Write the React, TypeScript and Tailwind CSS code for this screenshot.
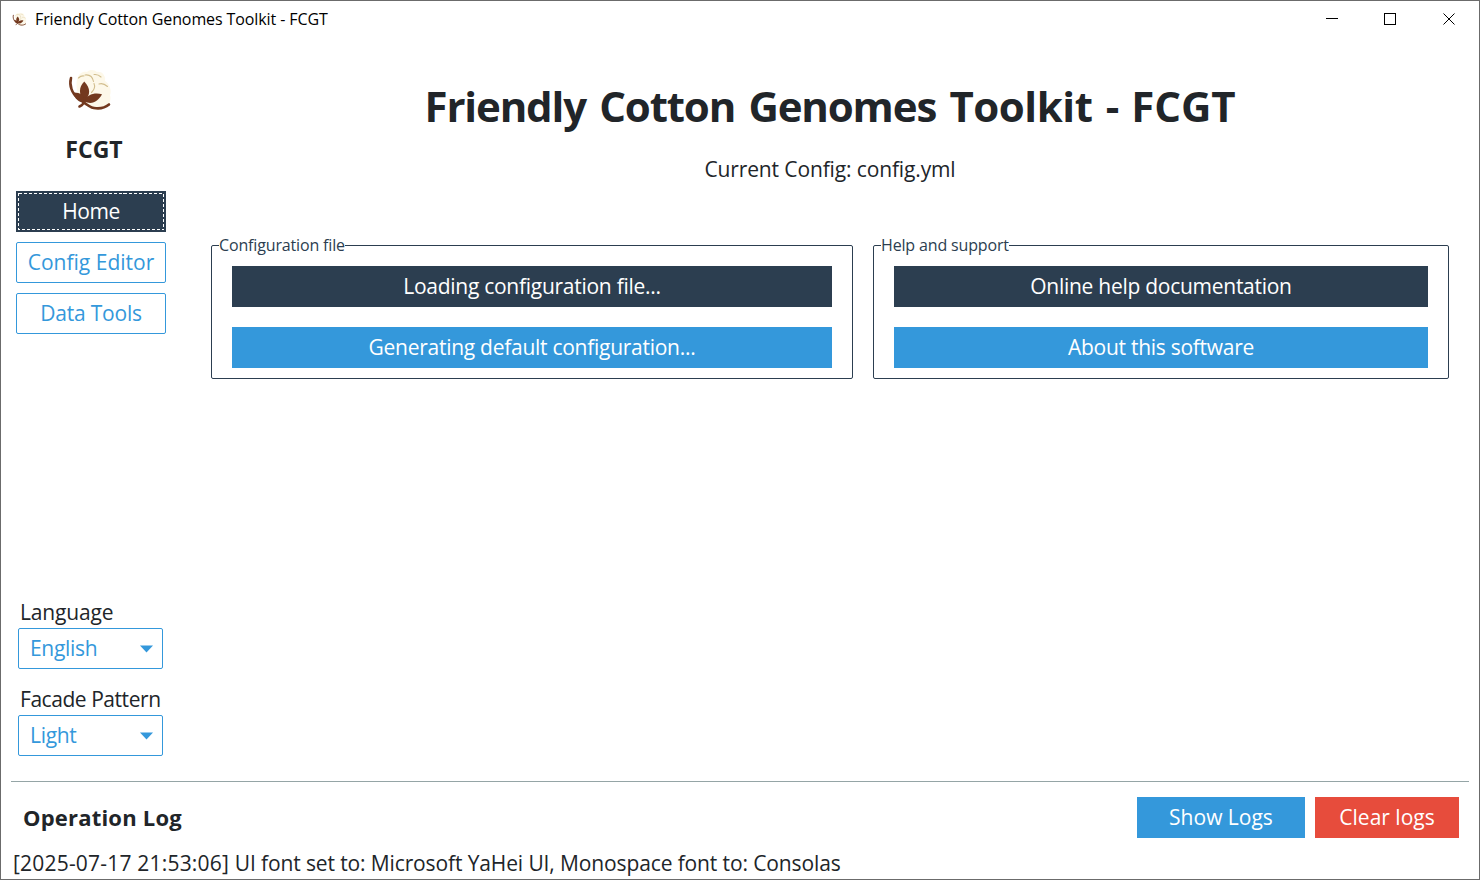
import React from 'react';

function Cotton({ className }: { className: string }) {
  return (
    <svg viewBox="0 0 46 42" className={className} fill="none">
      <path d="M10 9C12 3 16 1 20 2C23 -1 28 0 30 2C35 1 39 6 38 11C42 13 45 20 43 25C45 32 40 37 36 38C31 42 24 40 20 36C12 33 8 20 10 9Z" fill="#fdf8e9" />
      <path d="M11.5 8Q14 5.5 17 6M18 5Q25 4 26.5 11.5M27 4.5Q31 4 34 7M32 14Q36 12.5 40.5 16.5M27 13.5Q29 18 24.5 22.5" stroke="#d2be8e" strokeWidth="1.1" strokeLinecap="round" />
      <path d="M4 8C2 15 5 24 11 28C17 32 21 37 27 38C33 39 39 37 42 34.5" stroke="#73391f" strokeWidth="2.6" strokeLinecap="round" />
      <path d="M17.3 11.5C11.5 17 11.5 25 17.3 31C24 25 23.5 18 17.3 11.5Z" fill="#73391f" />
      <path d="M6 22.5C12 22 18 25 18.5 32C14 34 8 30 6 22.5Z" fill="#73391f" />
      <path d="M35 24.3C28 22 20 24.500 17 31C24 35.5 31 32 35 24.3Z" fill="#73391f" />
      <path d="M17.5 29C17.5 33 15 35.5 12.5 36.5" stroke="#73391f" strokeWidth="2.6" strokeLinecap="round" />
    </svg>
  );
}

function Group({ title, first, second, className }: { title: string; first: string; second: string; className: string }) {
  return (
    <fieldset className={`h-[143px] rounded-[2px] border border-[#2c3e50] px-5 ${className}`}>
      <legend className="-ml-[13px] h-[18px] text-[16px] leading-[18px] tracking-[-0.15px] text-[#2c3e50]">{title}</legend>
      <div className="flex flex-col gap-5 pt-[12px] tracking-[-0.27px]">
        <button className="h-[41px] bg-[#2c3e50] text-white">{first}</button>
        <button className="h-[41px] bg-[#3498db] text-white">{second}</button>
      </div>
    </fieldset>
  );
}

function Select({ label, value, labelClass }: { label: string; value: string; labelClass: string }) {
  return (
    <div className="flex flex-col">
      <div className={`h-[31px] pl-[2px] leading-[31px] whitespace-nowrap ${labelClass}`}>{label}</div>
      <button className="flex h-[41px] w-[145px] items-center justify-between rounded-[2px] border border-[#3498db] pl-[11px] pr-[8px] tracking-[-0.3px] text-[#3498db]">
        <span>{value}</span>
        <svg viewBox="0 0 14 8" className="h-2 w-[14px]"><path d="M0 0.5H13L6.5 7.5Z" fill="#3498db" /></svg>
      </button>
    </div>
  );
}

export default function App() {
  return (
    <div className="flex h-[880px] w-[1480px] flex-col overflow-hidden border border-[#6b6b6b] bg-white font-['Open_Sans','Noto_Sans',sans-serif] text-[21px] text-[#212529]">
      <header className="flex h-9 shrink-0 items-center pl-[11px] text-black">
        <Cotton className="h-[15px] w-[15px]" />
        <span className="ml-2 text-[16px] tracking-[-0.1px]">Friendly Cotton Genomes Toolkit - FCGT</span>
        <svg viewBox="0 0 130 14" className="ml-auto mr-[23px] h-[14px] w-[130px]" fill="none" stroke="black" shapeRendering="crispEdges">
          <path d="M0 6.5H12M58.5 1.5H69.5V12.5H58.5Z" />
          <path d="M117.5 1.5L128.5 12.5M128.5 1.5L117.5 12.5" shapeRendering="auto" />
        </svg>
      </header>
      <div className="flex h-[744px] shrink-0">
        <aside className="flex w-[185px] flex-col pl-[15px]">
          <Cotton className="ml-[51px] mt-[33px] h-[42px] w-[46px]" />
          <div className="mt-[21px] h-[32px] w-[156px] text-center text-[23px] font-bold leading-[32px]">FCGT</div>
          <nav className="mt-[26px] flex w-[150px] flex-col gap-[10px]">
            <button className="relative h-[41px] bg-[#2c3e50] tracking-[-0.4px] text-white">
              Home
              <svg className="absolute inset-0 h-full w-full" fill="none" stroke="white" strokeDasharray="3 2" shapeRendering="crispEdges">
                <rect x="2.5" y="2.5" width="145" height="36" />
              </svg>
            </button>
            <button className="h-[41px] rounded-[2px] border border-[#3498db] text-[#3498db]">Config Editor</button>
            <button className="h-[41px] rounded-[2px] border border-[#3498db] tracking-[-0.2px] text-[#3498db]">Data Tools</button>
          </nav>
          <div className="mb-[25px] ml-[2px] mt-auto flex flex-col gap-[15px]">
            <Select label="Language" value="English" labelClass="tracking-[-0.15px]" />
            <Select label="Facade Pattern" value="Light" labelClass="tracking-[-0.45px]" />
          </div>
        </aside>
        <main className="flex grow flex-col pl-[25px] pr-[30px]">
          <h1 className="mt-[39px] h-[60px] text-center text-[42px] font-bold leading-[60px] tracking-[-1.15px] [font-kerning:none] [word-spacing:3.5px]">
            Friendly Cotton Genomes <span className="tracking-[-0.45px]">Toolkit</span> - <span className="tracking-[-0.1px]">FCGT</span>
          </h1>
          <p className="mt-[18px] h-[30px] text-center leading-[30px] tracking-[-0.13px]">Current Config: config.yml</p>
          <div className="mt-[52px] flex gap-5">
            <Group className="w-[642px]" title="Configuration file" first="Loading configuration file..." second="Generating default configuration..." />
            <Group className="w-[576px]" title="Help and support" first="Online help documentation" second="About this software" />
          </div>
        </main>
      </div>
      <footer className="mx-[10px] flex grow flex-col border-t border-[#95a5a6]">
        <div className="mt-[15px] flex h-[41px] items-center gap-[10px] pl-3 pr-[10px]">
          <span className="mr-auto text-[22px] font-bold tracking-[0.2px]">Operation Log</span>
          <button className="h-[41px] w-[168px] bg-[#3498db] text-white">Show Logs</button>
          <button className="h-[41px] w-[144px] bg-[#e74c3c] text-white">Clear logs</button>
        </div>
        <div className="mt-[10px] h-[30px] whitespace-pre pl-[2px] leading-[30px] tracking-[-0.12px]">
          <span className="tracking-[0.2px]">[2025-07-17 21:53:06] </span>UI font set to: Microsoft YaHei UI, Monospace font to: Consolas
        </div>
      </footer>
    </div>
  );
}
